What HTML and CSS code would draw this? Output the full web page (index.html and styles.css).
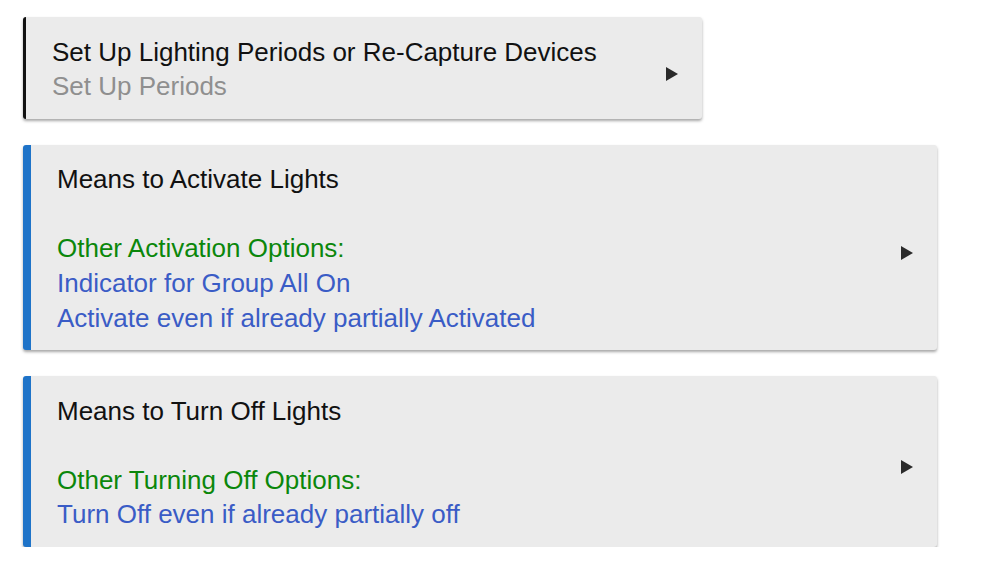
FILE: index.html
```html
<!DOCTYPE html>
<html>
<head>
<meta charset="utf-8">
<link rel="stylesheet" href="styles.css">
</head>
<body>
<div class="list">
  <div class="card card-dark">
    <div class="body">
      <div class="title">Set Up Lighting Periods or Re-Capture Devices</div>
      <div class="sub">Set Up Periods</div>
    </div>
    <span class="arrow"></span>
  </div>
  <div class="card card-blue">
    <div class="body">
      <div class="title">Means to Activate Lights</div>
      <div class="blank">&nbsp;</div>
      <div class="green">Other Activation Options:</div>
      <div class="blue">Indicator for Group All On</div>
      <div class="blue">Activate even if already partially Activated</div>
    </div>
    <span class="arrow"></span>
  </div>
  <div class="card card-blue">
    <div class="body">
      <div class="title">Means to Turn Off Lights</div>
      <div class="blank">&nbsp;</div>
      <div class="green">Other Turning Off Options:</div>
      <div class="blue">Turn Off even if already partially off</div>
    </div>
    <span class="arrow"></span>
  </div>
</div>
</body>
</html>
```
FILE: styles.css
```css
html, body {
  margin: 0;
  padding: 0;
  background: #ffffff;
}
body {
  font-family: "Liberation Sans", Arial, sans-serif;
  font-size: 26px;
  line-height: 34.6px;
  color: #111111;
}
.list {
  padding: 17px 0 0 23px;
  display: flex;
  flex-direction: column;
  align-items: flex-start;
  gap: 26px;
}
.card {
  display: flex;
  align-items: center;
  background: #ebebeb;
  border-radius: 3px;
  box-shadow: 0 2px 3px rgba(0, 0, 0, 0.35);
  padding: 17.5px 24px 15px 26px;
  box-sizing: border-box;
}
.card-dark {
  border-left: 3px solid #111111;
  width: 679px;
}
.card-blue {
  border-left: 8px solid #1e73c8;
  width: 914px;
}
.body {
  flex: 1;
  white-space: nowrap;
}
.sub {
  color: #8f8f8f;
}
.green {
  color: #0b870b;
}
.blue {
  color: #3a5cc6;
}
.arrow {
  width: 0;
  height: 0;
  margin-top: 9px;
  border-top: 7px solid transparent;
  border-bottom: 7px solid transparent;
  border-left: 12px solid #2a2a2a;
}
```
